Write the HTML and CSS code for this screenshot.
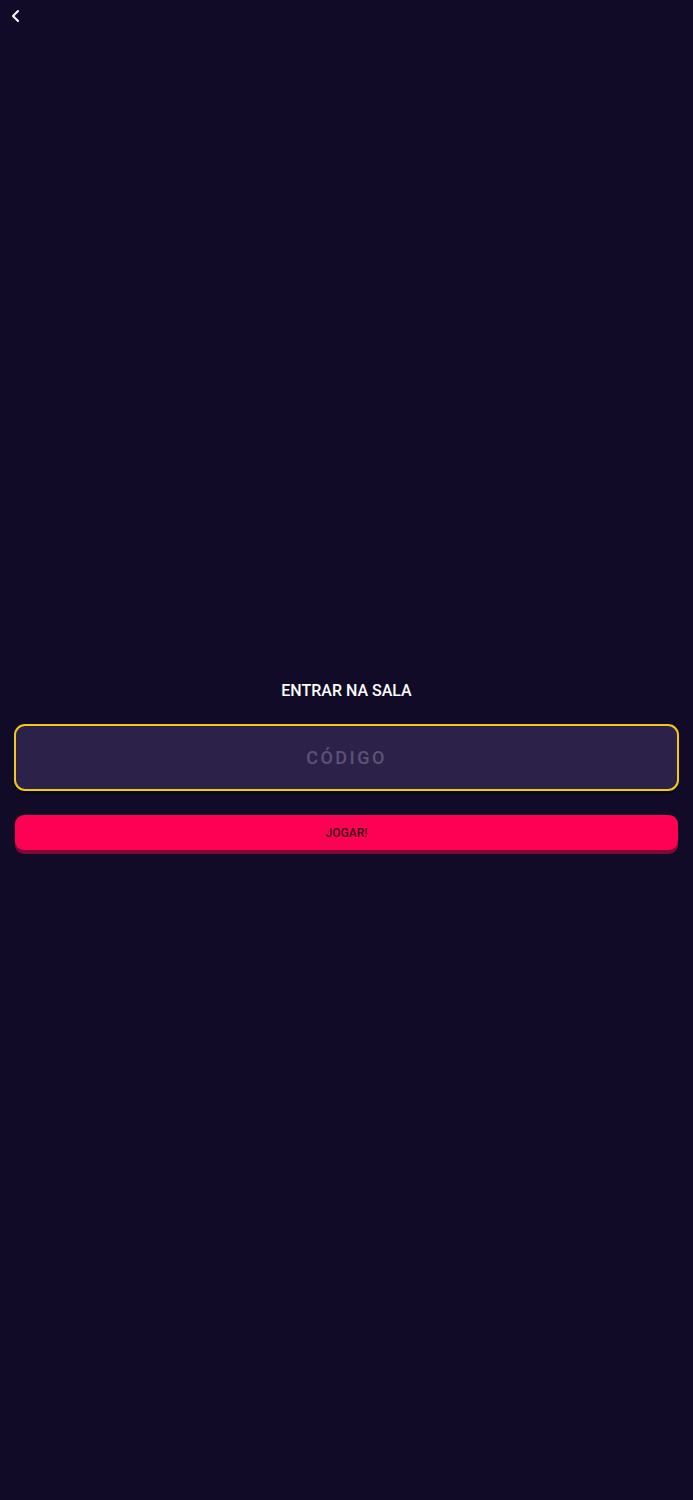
FILE: index.html
```html
<!DOCTYPE html>
<html lang="pt">
<head>
<meta charset="utf-8">
<link rel="stylesheet" href="styles.css">
</head>
<body>
<div class="screen">
  <header class="topbar">
    <button class="back" aria-label="Voltar">
      <svg width="12" height="14" viewBox="0 0 12 14"><path d="M8 2 L3 7 L8 12" fill="none" stroke="#ffffff" stroke-width="2" stroke-linecap="round" stroke-linejoin="round"/></svg>
    </button>
  </header>
  <main class="content">
    <h1 class="title">ENTRAR NA SALA</h1>
    <div class="input-wrap">
      <input class="code" type="text" placeholder="CÓDIGO">
    </div>
    <button class="play">JOGAR!</button>
  </main>
</div>
</body>
</html>
```
FILE: styles.css
```css
html, body {
  margin: 0;
  padding: 0;
  background: #110b28;
  font-family: Roboto, "Noto Sans", sans-serif;
}
.screen {
  width: 693px;
  height: 1500px;
  background: #110b28;
  display: flex;
  flex-direction: column;
}
.topbar {
  height: 32px;
  display: flex;
  align-items: flex-start;
}
.back {
  margin: 9px 0 0 10px;
  padding: 0;
  border: 0;
  background: none;
  width: 12px;
  height: 14px;
  display: flex;
}
.content {
  padding: 648px 14px 0 14px;
  display: flex;
  flex-direction: column;
}
.title {
  margin: 0;
  font-size: 16px;
  font-weight: 500;
  color: #ffffff;
  text-align: center;
  line-height: 22px;
}
.input-wrap {
  margin-top: 22px;
  border-radius: 11px;
  box-shadow: 0 3px 0 #0a0718;
}
.code {
  display: block;
  box-sizing: border-box;
  width: 100%;
  height: 67px;
  margin: 0;
  border: 2px solid #f0c91c;
  border-radius: 11px;
  background: #2c2249;
  color: #ffffff;
  text-align: center;
  font-family: Roboto, "Noto Sans", sans-serif;
  font-size: 18px;
  font-weight: 500;
  letter-spacing: 2.5px;
  outline: none;
}
.code::placeholder {
  color: #5d5277;
}
.play {
  margin: 24px 1px 0 1px;
  height: 35px;
  border: 0;
  border-radius: 9px;
  background: #ff0154;
  color: #3c0718;
  font-family: Roboto, "Noto Sans", sans-serif;
  font-size: 12px;
  font-weight: 500;
  box-shadow: 0 4px 0 #7d0a37;
  padding: 0;
}
```
